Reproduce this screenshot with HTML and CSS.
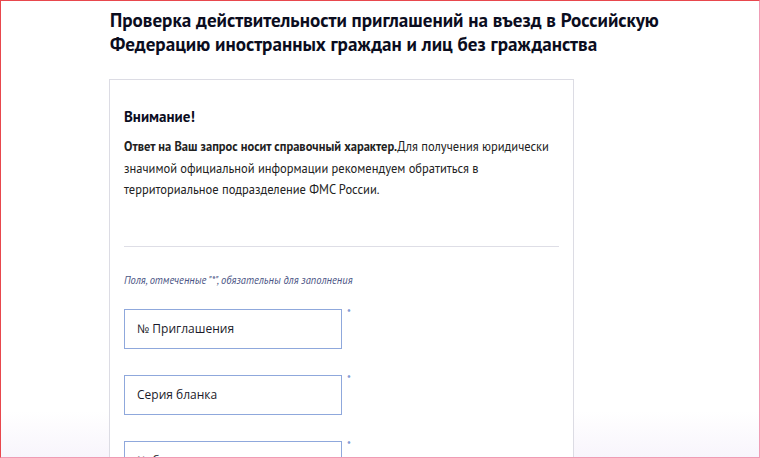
FILE: index.html
```html
<!DOCTYPE html>
<html lang="ru">
<head>
    <meta charset="UTF-8">
    <title>Проверка приглашений</title>
    <link rel="stylesheet" href="styles.css">
</head>
<body>
    <div class="frame">
        <div class="page">
            <h1>Проверка действительности приглашений на въезд в Российскую Федерацию иностранных граждан и лиц без гражданства</h1>

            <div class="card">
                <h2>Внимание!</h2>
                <p class="notice"><b>Ответ на Ваш запрос носит справочный характер.</b>Для получения юридически значимой официальной информации рекомендуем обратиться в территориальное подразделение ФМС России.</p>

                <hr>

                <p class="hint">Поля, отмеченные "*", обязательны для заполнения</p>

                <div class="field">
                    <input type="text" placeholder="№ Приглашения">
                    <span class="req">*</span>
                </div>
                <div class="field">
                    <input type="text" placeholder="Серия бланка">
                    <span class="req">*</span>
                </div>
                <div class="field">
                    <input type="text" placeholder="№ бланка">
                    <span class="req">*</span>
                </div>
            </div>
        </div>
    </div>
</body>
</html>
```

FILE: styles.css
```css
/* General */
html, body {
    margin: 0;
    padding: 0;
    height: 100%;
    overflow: hidden;
}

body {
    font-family: 'PT Sans', 'Noto Sans', sans-serif;
    color: #111;
    background-color: #fff;
}

.frame {
    box-sizing: border-box;
    height: 458px;
    border: 1px solid #f09cb5;
    border-top-color: #e8474d;
    border-left-color: #e8474d;
    background: linear-gradient(to bottom, #fff 0, #fff 410px, #f8f5fc 100%);
    overflow: hidden;
}

.page {
    padding: 7px 0 0 108px;
    width: 600px;
}

h1 {
    margin: 0 0 23px 1px;
    font-size: 19.1px;
    line-height: 24px;
    font-weight: 700;
    color: #0b0d1e;
}

/* Card */
.card {
    width: 435px;
    border: 1px solid #dcdce4;
    border-bottom: none;
    padding: 27px 14px 0;
    background-color: #fff;
}

h2 {
    margin: 0 0 10px;
    font-size: 15px;
    font-weight: 700;
    color: #0b0d1e;
}

.notice {
    margin: 0;
    font-size: 12.5px;
    line-height: 21.5px;
    color: #222;
    padding-right: 10px;
}

hr {
    border: none;
    border-top: 1px solid #dedee6;
    margin: 45px 0 26px;
}

.hint {
    margin: 0 0 22px;
    font-size: 10.5px;
    font-style: italic;
    color: #4b5585;
}

.field {
    display: flex;
    align-items: flex-start;
    margin-bottom: 26px;
}

.field input {
    box-sizing: border-box;
    width: 218px;
    height: 40px;
    border: 1px solid #8fa8dc;
    padding: 0 12px;
    font-family: 'Open Sans', sans-serif;
    font-size: 12px;
    outline: none;
}

.field input::placeholder {
    color: #1a1a2a;
}

.req {
    margin-left: 5px;
    font-size: 11px;
    line-height: 8px;
    color: #5d7fc8;
}
```
